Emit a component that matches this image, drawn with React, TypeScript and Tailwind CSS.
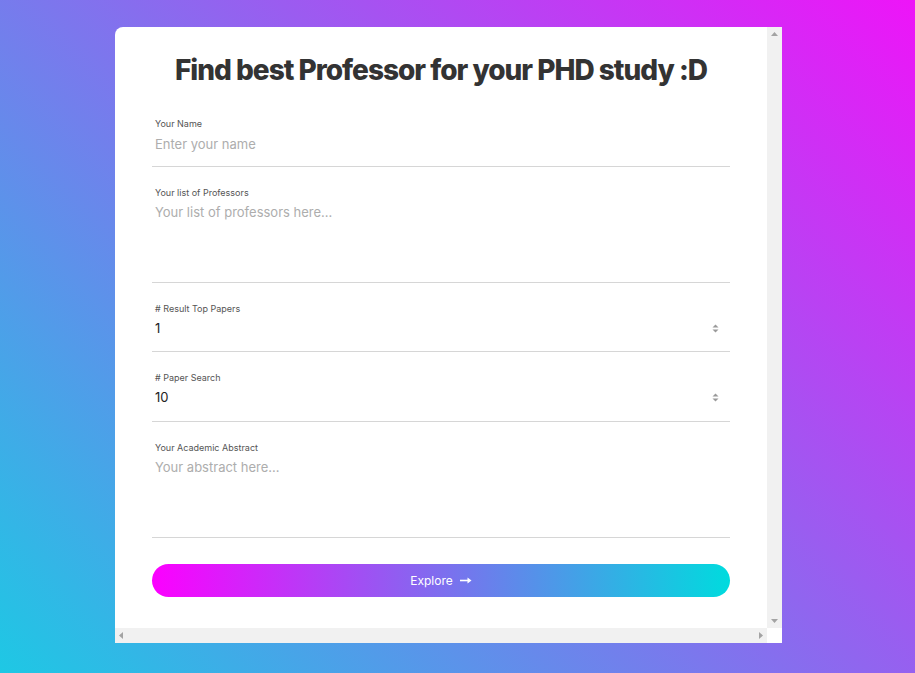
import React from "react";

const font = { fontFamily: "Inter, 'Open Sans', 'Liberation Sans', sans-serif" };

function Label({ children }: { children: React.ReactNode }) {
  return (
    <div className="h-[14px] leading-[14px] text-[9px] pl-[3px] text-[#555]">{children}</div>
  );
}

function Spinner() {
  return (
    <svg width="7" height="9" viewBox="0 0 7 9" className="shrink-0">
      <path d="M3.5 0.5 L6.5 3.5 L0.5 3.5 Z" fill="#9a9a9a" />
      <path d="M3.5 8.5 L6.5 5.5 L0.5 5.5 Z" fill="#9a9a9a" />
    </svg>
  );
}

function TextField({ label, placeholder }: { label: string; placeholder: string }) {
  return (
    <div className="border-b border-[#d6d6d6]">
      <Label>{label}</Label>
      <input
        className="block w-full h-[35px] pt-[4px] pb-[14px] px-[3px] text-[13px] leading-[17px] text-[#333] placeholder:text-[#adadad] outline-none bg-transparent"
        placeholder={placeholder}
        style={font}
      />
    </div>
  );
}

function AreaField({ label, placeholder }: { label: string; placeholder: string }) {
  return (
    <div className="border-b border-[#d6d6d6]">
      <Label>{label}</Label>
      <textarea
        className="block w-full h-[82px] pt-[4px] px-[3px] text-[13px] leading-[17px] text-[#333] placeholder:text-[#adadad] outline-none bg-transparent resize-none"
        placeholder={placeholder}
        style={font}
      />
    </div>
  );
}

function NumberField({ label, value, h }: { label: string; value: string; h: string }) {
  return (
    <div className="border-b border-[#d6d6d6]">
      <Label>{label}</Label>
      <div className={`flex items-start ${h} pt-[4px] pl-[3px] pr-[11px]`}>
        <div className="flex-1 text-[13px] leading-[17px] text-[#222]">{value}</div>
        <div className="h-[17px] flex items-center">
          <Spinner />
        </div>
      </div>
    </div>
  );
}

export default function App() {
  return (
    <div
      className="w-full min-h-[673px] pt-[27px] pl-[115px] bg-[linear-gradient(45deg,#1ec8e4,#ee14f8)]"
      style={font}
    >
      <div className="w-[667px] h-[616px] bg-white rounded-tl-[8px] overflow-hidden flex flex-col">
        <div className="flex h-[601px]">
          <div className="flex-1 px-[37px] pt-[26px]">
            <h1 className="text-[28px] leading-[34px] font-extrabold text-center text-[#333] tracking-[-1px]">
              Find best Professor for your PHD study :D
            </h1>
            <form className="mt-[30px] flex flex-col gap-[19px]">
              <TextField label="Your Name" placeholder="Enter your name" />
              <AreaField label="Your list of Professors" placeholder="Your list of professors here..." />
              <NumberField label="# Result Top Papers" value="1" h="h-[35px]" />
              <NumberField label="# Paper Search" value="10" h="h-[36px]" />
              <AreaField label="Your Academic Abstract" placeholder="Your abstract here..." />
            </form>
            <button
              type="button"
              className="mt-[26px] w-full h-[33px] rounded-full bg-[linear-gradient(to_right,#fc00ff,#00dbde)] flex items-center justify-center gap-[7px] text-white text-[12px]"
            >
              <span>Explore</span>
              <svg width="12" height="7" viewBox="0 0 12 7">
                <path d="M0 3.5 H8" stroke="white" strokeWidth="1.6" />
                <path d="M7.5 0.5 L11.5 3.5 L7.5 6.5 Z" fill="white" />
              </svg>
            </button>
          </div>
          <div className="w-[15px] bg-[#f1f1f1] flex flex-col items-center justify-between py-[5px]">
            <svg width="7" height="4" viewBox="0 0 7 4">
              <path d="M3.5 0 L7 4 L0 4 Z" fill="#a3a3a3" />
            </svg>
            <svg width="7" height="4" viewBox="0 0 7 4">
              <path d="M0 0 L7 0 L3.5 4 Z" fill="#a3a3a3" />
            </svg>
          </div>
        </div>
        <div className="flex h-[15px]">
          <div className="flex-1 bg-[#f1f1f1] flex items-center justify-between px-[4px]">
            <svg width="4" height="7" viewBox="0 0 4 7">
              <path d="M0 3.5 L4 0 L4 7 Z" fill="#a3a3a3" />
            </svg>
            <svg width="4" height="7" viewBox="0 0 4 7">
              <path d="M4 3.5 L0 0 L0 7 Z" fill="#a3a3a3" />
            </svg>
          </div>
          <div className="w-[15px] bg-white" />
        </div>
      </div>
    </div>
  );
}
